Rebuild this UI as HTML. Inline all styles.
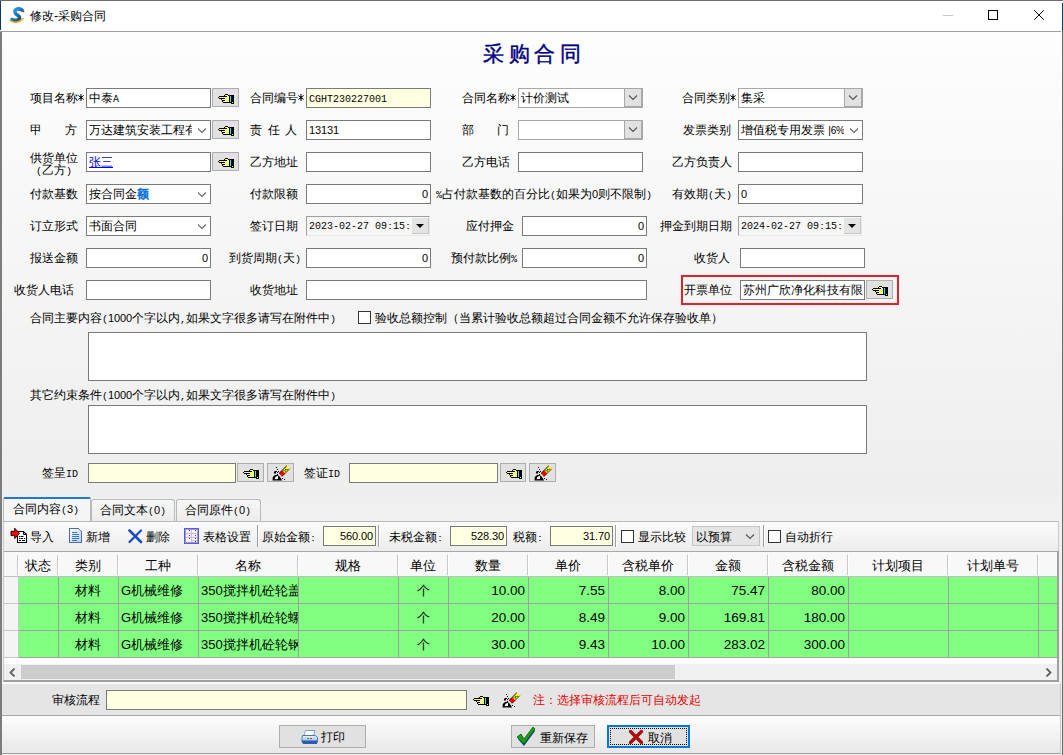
<!DOCTYPE html><html><head><meta charset="utf-8"><style>
@font-face{font-family:"Liberation Mono SA";src:local("Liberation Mono");size-adjust:83.4%;}
@font-face{font-family:"Liberation Sans SA";src:local("Liberation Sans");size-adjust:92%;}
.dg{font-family:"Liberation Sans SA","Liberation Sans",sans-serif;line-height:0}
*{box-sizing:border-box;margin:0;padding:0}
html,body{width:1063px;height:755px;overflow:hidden;background:#fff}
body{position:relative;font-family:"Liberation Sans",sans-serif;font-size:12px;color:#000}
div,svg{position:absolute}
.tx{position:static}
.lb{height:20px;line-height:24px;white-space:nowrap;font-family:"Liberation Mono SA","Liberation Sans",sans-serif}
.in{border:1px solid #7a7a7a;line-height:21px;padding:0 2px;white-space:nowrap;overflow:hidden;font-family:"Liberation Mono SA","Liberation Sans",sans-serif}
.in.cb{border-color:#7a7a7a}
.chw{right:0;top:0;width:18px;height:18px;background:#fff}
.chw svg{left:5px;top:7px}
.chw path{stroke:#6a6a6a}
.chw svg,.cbb svg{position:absolute}
.cbb{right:-1px;top:-1px;width:19px;height:20px;background:#e1e1e1;border-left:1px solid #a8a8a8;border-right:2px solid #a8a8a8;border-bottom:2px solid #a8a8a8;border-top:1px solid #a8a8a8}
.cbb svg{left:3px;top:6px}
.cb2{border-color:#a8a8a8 !important}
.dt{border-color:#a0a0a0;border-right-color:#e8e8e8;border-bottom-color:#e8e8e8;line-height:20px}
.dbb{right:0;top:1px;width:17px;height:16px;background:#e4e4e4;border-right:1px solid #c8c8c8;border-bottom:1px solid #c8c8c8}
.dbb svg{left:4px;top:6px}
.hb{background:#e1e1e1;border:1px solid #adadad}
.ast{position:relative;vertical-align:-1px}
.hand{position:absolute}
.sans{font-family:"Liberation Sans",sans-serif}
.in .sans,.lb .sans{line-height:0}
.mono{font-family:"Liberation Mono SA","Liberation Sans",sans-serif}
</style></head><body>
<div style="left:0;top:32px;width:1063px;height:465px;background:linear-gradient(#fdfdfd,#eeeeee)"></div>
<div style="left:0;top:497px;width:1063px;height:258px;background:#f0f0f0"></div>
<div style="left:0;top:0;width:1063px;height:1px;background:#6e6e6e"></div>
<div style="left:0;top:1px;width:1px;height:29px;background:#0c3a6a"></div>
<div style="left:0;top:31px;width:2px;height:724px;background:#7c7c7c"></div>
<div style="left:1062px;top:3px;width:1px;height:27px;background:#0c3a6a"></div>
<div style="left:1062px;top:30px;width:1px;height:725px;background:#6a6a6a"></div>
<div style="left:0;top:31px;width:1061px;height:1px;background:#a0a0a0"></div>
<svg style="left:9px;top:7px" width="17" height="17" viewBox="0 0 17 17"><defs><linearGradient id="sg" x1="0" y1="0" x2="1" y2="1"><stop offset="0" stop-color="#3aa8e8"/><stop offset="1" stop-color="#0a3c80"/></linearGradient></defs><path d="M13 3 C9.5 0.8 5.5 2 6 5.2 C6.5 8.2 11 8 10.5 11 C10 13.5 6 14 3 12.5" fill="none" stroke="url(#sg)" stroke-width="3.6" stroke-linecap="round"/><path d="M1.5 13.5 C5 16.5 11 15.5 14 11.5" fill="none" stroke="#f0a818" stroke-width="1.6" stroke-linecap="round"/><path d="M14.5 3.5l1 1-1 1-1-1z" fill="#e01010"/></svg>
<div class="sans" style="left:30px;top:8px;line-height:16px;font-size:12px">修改-采购合同</div>
<div style="left:943px;top:15px;width:10px;height:1px;background:#c8c8c8"></div>
<div style="left:988px;top:10px;width:10px;height:10px;border:1px solid #000"></div>
<svg style="left:1034px;top:10px" width="10" height="10" viewBox="0 0 10 10"><path d="M0.3 0.3L9.7 9.7M9.7 0.3L0.3 9.7" stroke="#000" stroke-width="1"/></svg>
<div style="left:483px;top:40px;height:28px;line-height:28px;font-family:'Liberation Serif',serif;font-weight:normal;-webkit-text-stroke:0.4px #000080;font-size:21px;color:#000080;letter-spacing:4.5px;white-space:nowrap">采购合同</div>
<div class="lb " style="left:30px;top:88px;">项目名称<svg class="ast" width="6" height="12" viewBox="0 0 6 12"><path d="M3 3v7M0.3 4.5L5.7 8.5M5.7 4.5L0.3 8.5" stroke="#000" stroke-width="1"/><rect x="2" y="5.5" width="2" height="2" fill="#000"/></svg></div>
<div class="in " style="left:86px;top:88px;width:125px;height:20px;background:#fff;text-align:left;">中泰A</div>
<div class="hb" style="left:212px;top:88px;width:27px;height:19px"><svg class="hand" style="left:5px;top:5px" width="16" height="10" viewBox="0 0 16 10" shape-rendering="crispEdges"><path d="M7 0h1v1h-1zM8 0h1v1h-1zM9 0h1v1h-1zM6 1h1v1h-1zM10 1h1v1h-1zM11 1h1v1h-1zM12 1h1v1h-1zM13 1h1v1h-1zM14 1h1v1h-1zM15 1h1v1h-1zM1 2h1v1h-1zM2 2h1v1h-1zM3 2h1v1h-1zM4 2h1v1h-1zM5 2h1v1h-1zM6 2h1v1h-1zM7 2h1v1h-1zM8 2h1v1h-1zM11 2h1v1h-1zM13 2h1v1h-1zM14 2h1v1h-1zM15 2h1v1h-1zM0 3h1v1h-1zM11 3h1v1h-1zM13 3h1v1h-1zM14 3h1v1h-1zM15 3h1v1h-1zM1 4h1v1h-1zM2 4h1v1h-1zM3 4h1v1h-1zM4 4h1v1h-1zM5 4h1v1h-1zM6 4h1v1h-1zM11 4h1v1h-1zM13 4h1v1h-1zM14 4h1v1h-1zM15 4h1v1h-1zM3 5h1v1h-1zM11 5h1v1h-1zM13 5h1v1h-1zM14 5h1v1h-1zM15 5h1v1h-1zM4 6h1v1h-1zM5 6h1v1h-1zM6 6h1v1h-1zM11 6h1v1h-1zM13 6h1v1h-1zM14 6h1v1h-1zM15 6h1v1h-1zM4 7h1v1h-1zM11 7h1v1h-1zM13 7h1v1h-1zM14 7h1v1h-1zM15 7h1v1h-1zM5 8h1v1h-1zM6 8h1v1h-1zM7 8h1v1h-1zM8 8h1v1h-1zM9 8h1v1h-1zM10 8h1v1h-1zM11 8h1v1h-1zM12 8h1v1h-1zM13 8h1v1h-1zM15 8h1v1h-1zM13 9h1v1h-1zM14 9h1v1h-1zM15 9h1v1h-1z" fill="#000"/><path d="M7 1h1v1h-1zM9 1h1v1h-1zM10 2h1v1h-1zM1 3h1v1h-1zM3 3h1v1h-1zM5 3h1v1h-1zM7 3h1v1h-1zM9 3h1v1h-1zM8 4h1v1h-1zM10 4h1v1h-1zM5 5h1v1h-1zM7 5h1v1h-1zM9 5h1v1h-1zM8 6h1v1h-1zM10 6h1v1h-1zM5 7h1v1h-1zM7 7h1v1h-1zM9 7h1v1h-1zM14 8h1v1h-1z" fill="#ff0"/><path d="M8 1h1v1h-1zM9 2h1v1h-1zM2 3h1v1h-1zM4 3h1v1h-1zM6 3h1v1h-1zM8 3h1v1h-1zM10 3h1v1h-1zM7 4h1v1h-1zM9 4h1v1h-1zM4 5h1v1h-1zM6 5h1v1h-1zM8 5h1v1h-1zM10 5h1v1h-1zM7 6h1v1h-1zM9 6h1v1h-1zM6 7h1v1h-1zM8 7h1v1h-1zM10 7h1v1h-1z" fill="#fff"/><path d="M12 2h1v1h-1zM12 3h1v1h-1zM12 4h1v1h-1zM12 5h1v1h-1zM12 6h1v1h-1zM12 7h1v1h-1z" fill="#0ff"/></svg></div>
<div class="lb " style="left:250px;top:88px;">合同编号<svg class="ast" width="6" height="12" viewBox="0 0 6 12"><path d="M3 3v7M0.3 4.5L5.7 8.5M5.7 4.5L0.3 8.5" stroke="#000" stroke-width="1"/><rect x="2" y="5.5" width="2" height="2" fill="#000"/></svg></div>
<div class="in " style="left:306px;top:88px;width:125px;height:20px;background:#ffffe1;text-align:left;">CGHT230227001</div>
<div class="lb " style="left:462px;top:88px;">合同名称<svg class="ast" width="6" height="12" viewBox="0 0 6 12"><path d="M3 3v7M0.3 4.5L5.7 8.5M5.7 4.5L0.3 8.5" stroke="#000" stroke-width="1"/><rect x="2" y="5.5" width="2" height="2" fill="#000"/></svg></div>
<div class="in cb cb2" style="left:518px;top:88px;width:125px;height:20px;background:#fff;"><span class="tx"><span class="sans">计价测试</span></span><div class="cbb"><svg class="chev" width="10" height="6" viewBox="0 0 10 6"><path d="M1 0.5 L5 4.5 L9 0.5" fill="none" stroke="#555" stroke-width="1.1"/></svg></div></div>
<div class="lb " style="left:682px;top:88px;">合同类别<svg class="ast" width="6" height="12" viewBox="0 0 6 12"><path d="M3 3v7M0.3 4.5L5.7 8.5M5.7 4.5L0.3 8.5" stroke="#000" stroke-width="1"/><rect x="2" y="5.5" width="2" height="2" fill="#000"/></svg></div>
<div class="in cb cb2" style="left:738px;top:88px;width:125px;height:20px;background:#fff;"><span class="tx"><span class="sans">集采</span></span><div class="cbb"><svg class="chev" width="10" height="6" viewBox="0 0 10 6"><path d="M1 0.5 L5 4.5 L9 0.5" fill="none" stroke="#555" stroke-width="1.1"/></svg></div></div>
<div class="lb " style="left:30px;top:120px;">甲</div>
<div class="lb " style="left:65px;top:120px;">方</div>
<div class="in cb" style="left:86px;top:120px;width:125px;height:20px;background:#fff;"><span class="tx"><span class="sans">万达建筑安装工程有</span></span><div class="chw"><svg class="chev" width="10" height="6" viewBox="0 0 10 6"><path d="M1 0.5 L5 4.5 L9 0.5" fill="none" stroke="#555" stroke-width="1.1"/></svg></div></div>
<div class="hb" style="left:212px;top:120px;width:27px;height:19px"><svg class="hand" style="left:5px;top:5px" width="16" height="10" viewBox="0 0 16 10" shape-rendering="crispEdges"><path d="M7 0h1v1h-1zM8 0h1v1h-1zM9 0h1v1h-1zM6 1h1v1h-1zM10 1h1v1h-1zM11 1h1v1h-1zM12 1h1v1h-1zM13 1h1v1h-1zM14 1h1v1h-1zM15 1h1v1h-1zM1 2h1v1h-1zM2 2h1v1h-1zM3 2h1v1h-1zM4 2h1v1h-1zM5 2h1v1h-1zM6 2h1v1h-1zM7 2h1v1h-1zM8 2h1v1h-1zM11 2h1v1h-1zM13 2h1v1h-1zM14 2h1v1h-1zM15 2h1v1h-1zM0 3h1v1h-1zM11 3h1v1h-1zM13 3h1v1h-1zM14 3h1v1h-1zM15 3h1v1h-1zM1 4h1v1h-1zM2 4h1v1h-1zM3 4h1v1h-1zM4 4h1v1h-1zM5 4h1v1h-1zM6 4h1v1h-1zM11 4h1v1h-1zM13 4h1v1h-1zM14 4h1v1h-1zM15 4h1v1h-1zM3 5h1v1h-1zM11 5h1v1h-1zM13 5h1v1h-1zM14 5h1v1h-1zM15 5h1v1h-1zM4 6h1v1h-1zM5 6h1v1h-1zM6 6h1v1h-1zM11 6h1v1h-1zM13 6h1v1h-1zM14 6h1v1h-1zM15 6h1v1h-1zM4 7h1v1h-1zM11 7h1v1h-1zM13 7h1v1h-1zM14 7h1v1h-1zM15 7h1v1h-1zM5 8h1v1h-1zM6 8h1v1h-1zM7 8h1v1h-1zM8 8h1v1h-1zM9 8h1v1h-1zM10 8h1v1h-1zM11 8h1v1h-1zM12 8h1v1h-1zM13 8h1v1h-1zM15 8h1v1h-1zM13 9h1v1h-1zM14 9h1v1h-1zM15 9h1v1h-1z" fill="#000"/><path d="M7 1h1v1h-1zM9 1h1v1h-1zM10 2h1v1h-1zM1 3h1v1h-1zM3 3h1v1h-1zM5 3h1v1h-1zM7 3h1v1h-1zM9 3h1v1h-1zM8 4h1v1h-1zM10 4h1v1h-1zM5 5h1v1h-1zM7 5h1v1h-1zM9 5h1v1h-1zM8 6h1v1h-1zM10 6h1v1h-1zM5 7h1v1h-1zM7 7h1v1h-1zM9 7h1v1h-1zM14 8h1v1h-1z" fill="#ff0"/><path d="M8 1h1v1h-1zM9 2h1v1h-1zM2 3h1v1h-1zM4 3h1v1h-1zM6 3h1v1h-1zM8 3h1v1h-1zM10 3h1v1h-1zM7 4h1v1h-1zM9 4h1v1h-1zM4 5h1v1h-1zM6 5h1v1h-1zM8 5h1v1h-1zM10 5h1v1h-1zM7 6h1v1h-1zM9 6h1v1h-1zM6 7h1v1h-1zM8 7h1v1h-1zM10 7h1v1h-1z" fill="#fff"/><path d="M12 2h1v1h-1zM12 3h1v1h-1zM12 4h1v1h-1zM12 5h1v1h-1zM12 6h1v1h-1zM12 7h1v1h-1z" fill="#0ff"/></svg></div>
<div class="lb " style="left:250px;top:120px;">责</div>
<div class="lb " style="left:268px;top:120px;">任</div>
<div class="lb " style="left:285px;top:120px;">人</div>
<div class="in " style="left:306px;top:120px;width:125px;height:20px;background:#fff;text-align:left;"><span class="dg">13131</span></div>
<div class="lb " style="left:462px;top:120px;">部</div>
<div class="lb " style="left:497px;top:120px;">门</div>
<div class="in cb cb2" style="left:518px;top:120px;width:125px;height:20px;background:#fff;"><span class="tx"></span><div class="cbb"><svg class="chev" width="10" height="6" viewBox="0 0 10 6"><path d="M1 0.5 L5 4.5 L9 0.5" fill="none" stroke="#555" stroke-width="1.1"/></svg></div></div>
<div class="lb " style="left:683px;top:120px;">发票类别</div>
<div class="in cb" style="left:738px;top:120px;width:125px;height:20px;background:#fff;"><span class="tx"><span class="sans">增值税专用发票 <span style="font-size:10px;letter-spacing:-0.3px">|6%</span></span></span><div class="chw"><svg class="chev" width="10" height="6" viewBox="0 0 10 6"><path d="M1 0.5 L5 4.5 L9 0.5" fill="none" stroke="#555" stroke-width="1.1"/></svg></div></div>
<div class="lb" style="left:30px;top:154px;line-height:12px;height:30px">供货单位</div>
<div class="lb" style="left:30px;top:166px;line-height:12px;height:30px">&nbsp;(乙方)</div>
<div class="in " style="left:86px;top:152px;width:125px;height:20px;background:#fff;text-align:left;"><span class="sans" style="color:#0000ff;text-decoration:underline">张三</span></div>
<div class="hb" style="left:212px;top:152px;width:27px;height:19px"><svg class="hand" style="left:5px;top:5px" width="16" height="10" viewBox="0 0 16 10" shape-rendering="crispEdges"><path d="M7 0h1v1h-1zM8 0h1v1h-1zM9 0h1v1h-1zM6 1h1v1h-1zM10 1h1v1h-1zM11 1h1v1h-1zM12 1h1v1h-1zM13 1h1v1h-1zM14 1h1v1h-1zM15 1h1v1h-1zM1 2h1v1h-1zM2 2h1v1h-1zM3 2h1v1h-1zM4 2h1v1h-1zM5 2h1v1h-1zM6 2h1v1h-1zM7 2h1v1h-1zM8 2h1v1h-1zM11 2h1v1h-1zM13 2h1v1h-1zM14 2h1v1h-1zM15 2h1v1h-1zM0 3h1v1h-1zM11 3h1v1h-1zM13 3h1v1h-1zM14 3h1v1h-1zM15 3h1v1h-1zM1 4h1v1h-1zM2 4h1v1h-1zM3 4h1v1h-1zM4 4h1v1h-1zM5 4h1v1h-1zM6 4h1v1h-1zM11 4h1v1h-1zM13 4h1v1h-1zM14 4h1v1h-1zM15 4h1v1h-1zM3 5h1v1h-1zM11 5h1v1h-1zM13 5h1v1h-1zM14 5h1v1h-1zM15 5h1v1h-1zM4 6h1v1h-1zM5 6h1v1h-1zM6 6h1v1h-1zM11 6h1v1h-1zM13 6h1v1h-1zM14 6h1v1h-1zM15 6h1v1h-1zM4 7h1v1h-1zM11 7h1v1h-1zM13 7h1v1h-1zM14 7h1v1h-1zM15 7h1v1h-1zM5 8h1v1h-1zM6 8h1v1h-1zM7 8h1v1h-1zM8 8h1v1h-1zM9 8h1v1h-1zM10 8h1v1h-1zM11 8h1v1h-1zM12 8h1v1h-1zM13 8h1v1h-1zM15 8h1v1h-1zM13 9h1v1h-1zM14 9h1v1h-1zM15 9h1v1h-1z" fill="#000"/><path d="M7 1h1v1h-1zM9 1h1v1h-1zM10 2h1v1h-1zM1 3h1v1h-1zM3 3h1v1h-1zM5 3h1v1h-1zM7 3h1v1h-1zM9 3h1v1h-1zM8 4h1v1h-1zM10 4h1v1h-1zM5 5h1v1h-1zM7 5h1v1h-1zM9 5h1v1h-1zM8 6h1v1h-1zM10 6h1v1h-1zM5 7h1v1h-1zM7 7h1v1h-1zM9 7h1v1h-1zM14 8h1v1h-1z" fill="#ff0"/><path d="M8 1h1v1h-1zM9 2h1v1h-1zM2 3h1v1h-1zM4 3h1v1h-1zM6 3h1v1h-1zM8 3h1v1h-1zM10 3h1v1h-1zM7 4h1v1h-1zM9 4h1v1h-1zM4 5h1v1h-1zM6 5h1v1h-1zM8 5h1v1h-1zM10 5h1v1h-1zM7 6h1v1h-1zM9 6h1v1h-1zM6 7h1v1h-1zM8 7h1v1h-1zM10 7h1v1h-1z" fill="#fff"/><path d="M12 2h1v1h-1zM12 3h1v1h-1zM12 4h1v1h-1zM12 5h1v1h-1zM12 6h1v1h-1zM12 7h1v1h-1z" fill="#0ff"/></svg></div>
<div class="lb " style="left:250px;top:152px;">乙方地址</div>
<div class="in " style="left:306px;top:152px;width:125px;height:20px;background:#fff;text-align:left;"></div>
<div class="lb " style="left:462px;top:152px;">乙方电话</div>
<div class="in " style="left:518px;top:152px;width:125px;height:20px;background:#fff;text-align:left;"></div>
<div class="lb " style="left:672px;top:152px;">乙方负责人</div>
<div class="in " style="left:738px;top:152px;width:125px;height:20px;background:#fff;text-align:left;"></div>
<div class="lb " style="left:30px;top:184px;">付款基数</div>
<div class="in cb" style="left:86px;top:184px;width:125px;height:20px;background:#fff;"><span class="tx"><span class="sans">按合同金<span style="color:#0a72dc;-webkit-text-stroke:0.6px #0a72dc">额</span></span></span><div class="chw"><svg class="chev" width="10" height="6" viewBox="0 0 10 6"><path d="M1 0.5 L5 4.5 L9 0.5" fill="none" stroke="#555" stroke-width="1.1"/></svg></div></div>
<div class="lb " style="left:250px;top:184px;">付款限额</div>
<div class="in " style="left:306px;top:184px;width:125px;height:20px;background:#fff;text-align:right;"><span class="dg">0</span></div>
<div class="lb " style="left:436px;top:184px;">%占付款基数的百分比(如果为<span class="dg">0</span>则不限制)</div>
<div class="lb " style="left:672px;top:184px;">有效期(天)</div>
<div class="in " style="left:738px;top:184px;width:125px;height:20px;background:#fff;text-align:left;"><span class="dg">0</span></div>
<div class="lb " style="left:30px;top:216px;">订立形式</div>
<div class="in cb" style="left:86px;top:216px;width:125px;height:20px;background:#fff;"><span class="tx"><span class="sans">书面合同</span></span><div class="chw"><svg class="chev" width="10" height="6" viewBox="0 0 10 6"><path d="M1 0.5 L5 4.5 L9 0.5" fill="none" stroke="#555" stroke-width="1.1"/></svg></div></div>
<div class="lb " style="left:250px;top:216px;">签订日期</div>
<div class="in dt" style="left:306px;top:216px;width:124px;height:20px"><span class="tx mono">2023-02-27 09:15:(</span><div class="dbb"><svg width="8" height="4" viewBox="0 0 8 4"><path d="M0 0h8L4 4z" fill="#000"/></svg></div></div>
<div class="lb " style="left:466px;top:216px;">应付押金</div>
<div class="in " style="left:522px;top:216px;width:125px;height:20px;background:#fff;text-align:right;"><span class="dg">0</span></div>
<div class="lb " style="left:660px;top:216px;">押金到期日期</div>
<div class="in dt" style="left:738px;top:216px;width:124px;height:20px"><span class="tx mono">2024-02-27 09:15:</span><div class="dbb"><svg width="8" height="4" viewBox="0 0 8 4"><path d="M0 0h8L4 4z" fill="#000"/></svg></div></div>
<div class="lb " style="left:30px;top:248px;">报送金额</div>
<div class="in " style="left:86px;top:248px;width:125px;height:20px;background:#fff;text-align:right;"><span class="dg">0</span></div>
<div class="lb " style="left:229px;top:248px;">到货周期(天)</div>
<div class="in " style="left:306px;top:248px;width:125px;height:20px;background:#fff;text-align:right;"><span class="dg">0</span></div>
<div class="lb " style="left:451px;top:248px;">预付款比例%</div>
<div class="in " style="left:522px;top:248px;width:125px;height:20px;background:#fff;text-align:right;"><span class="dg">0</span></div>
<div class="lb " style="left:694px;top:248px;">收货人</div>
<div class="in " style="left:740px;top:248px;width:125px;height:20px;background:#fff;text-align:left;"></div>
<div class="lb " style="left:14px;top:280px;">收货人电话</div>
<div class="in " style="left:86px;top:280px;width:125px;height:20px;background:#fff;text-align:left;"></div>
<div class="lb " style="left:250px;top:280px;">收货地址</div>
<div class="in " style="left:306px;top:280px;width:341px;height:20px;background:#fff;text-align:left;"></div>
<div style="left:681px;top:275px;width:218px;height:30px;border:2px solid #e3212b"></div>
<div class="lb " style="left:684px;top:280px;">开票单位</div>
<div class="in " style="left:740px;top:280px;width:125px;height:20px;background:#fff;text-align:left;"><span class="sans">苏州广欣净化科技有限</span></div>
<div class="hb" style="left:866px;top:280px;width:27px;height:19px"><svg class="hand" style="left:5px;top:5px" width="16" height="10" viewBox="0 0 16 10" shape-rendering="crispEdges"><path d="M7 0h1v1h-1zM8 0h1v1h-1zM9 0h1v1h-1zM6 1h1v1h-1zM10 1h1v1h-1zM11 1h1v1h-1zM12 1h1v1h-1zM13 1h1v1h-1zM14 1h1v1h-1zM15 1h1v1h-1zM1 2h1v1h-1zM2 2h1v1h-1zM3 2h1v1h-1zM4 2h1v1h-1zM5 2h1v1h-1zM6 2h1v1h-1zM7 2h1v1h-1zM8 2h1v1h-1zM11 2h1v1h-1zM13 2h1v1h-1zM14 2h1v1h-1zM15 2h1v1h-1zM0 3h1v1h-1zM11 3h1v1h-1zM13 3h1v1h-1zM14 3h1v1h-1zM15 3h1v1h-1zM1 4h1v1h-1zM2 4h1v1h-1zM3 4h1v1h-1zM4 4h1v1h-1zM5 4h1v1h-1zM6 4h1v1h-1zM11 4h1v1h-1zM13 4h1v1h-1zM14 4h1v1h-1zM15 4h1v1h-1zM3 5h1v1h-1zM11 5h1v1h-1zM13 5h1v1h-1zM14 5h1v1h-1zM15 5h1v1h-1zM4 6h1v1h-1zM5 6h1v1h-1zM6 6h1v1h-1zM11 6h1v1h-1zM13 6h1v1h-1zM14 6h1v1h-1zM15 6h1v1h-1zM4 7h1v1h-1zM11 7h1v1h-1zM13 7h1v1h-1zM14 7h1v1h-1zM15 7h1v1h-1zM5 8h1v1h-1zM6 8h1v1h-1zM7 8h1v1h-1zM8 8h1v1h-1zM9 8h1v1h-1zM10 8h1v1h-1zM11 8h1v1h-1zM12 8h1v1h-1zM13 8h1v1h-1zM15 8h1v1h-1zM13 9h1v1h-1zM14 9h1v1h-1zM15 9h1v1h-1z" fill="#000"/><path d="M7 1h1v1h-1zM9 1h1v1h-1zM10 2h1v1h-1zM1 3h1v1h-1zM3 3h1v1h-1zM5 3h1v1h-1zM7 3h1v1h-1zM9 3h1v1h-1zM8 4h1v1h-1zM10 4h1v1h-1zM5 5h1v1h-1zM7 5h1v1h-1zM9 5h1v1h-1zM8 6h1v1h-1zM10 6h1v1h-1zM5 7h1v1h-1zM7 7h1v1h-1zM9 7h1v1h-1zM14 8h1v1h-1z" fill="#ff0"/><path d="M8 1h1v1h-1zM9 2h1v1h-1zM2 3h1v1h-1zM4 3h1v1h-1zM6 3h1v1h-1zM8 3h1v1h-1zM10 3h1v1h-1zM7 4h1v1h-1zM9 4h1v1h-1zM4 5h1v1h-1zM6 5h1v1h-1zM8 5h1v1h-1zM10 5h1v1h-1zM7 6h1v1h-1zM9 6h1v1h-1zM6 7h1v1h-1zM8 7h1v1h-1zM10 7h1v1h-1z" fill="#fff"/><path d="M12 2h1v1h-1zM12 3h1v1h-1zM12 4h1v1h-1zM12 5h1v1h-1zM12 6h1v1h-1zM12 7h1v1h-1z" fill="#0ff"/></svg></div>
<div class="lb " style="left:30px;top:308px;">合同主要内容(<span class="dg">1000</span>个字以内,如果文字很多请写在附件中)</div>
<div style="left:358px;top:311px;width:13px;height:13px;border:1px solid #333;background:#fff"></div>
<div class="lb " style="left:375px;top:308px;"><span class="sans">验收总额控制（当累计验收总额超过合同金额不允许保存验收单）</span></div>
<div class="in " style="left:88px;top:332px;width:779px;height:49px;background:#fff;text-align:left;"></div>
<div class="lb " style="left:30px;top:385px;">其它约束条件(<span class="dg">1000</span>个字以内,如果文字很多请写在附件中)</div>
<div class="in " style="left:88px;top:405px;width:779px;height:49px;background:#fff;text-align:left;"></div>
<div class="lb " style="left:42px;top:463px;">签呈ID</div>
<div class="in " style="left:88px;top:463px;width:148px;height:20px;background:#ffffe1;text-align:left;"></div>
<div class="hb" style="left:237px;top:463px;width:27px;height:19px"><svg class="hand" style="left:5px;top:5px" width="16" height="10" viewBox="0 0 16 10" shape-rendering="crispEdges"><path d="M7 0h1v1h-1zM8 0h1v1h-1zM9 0h1v1h-1zM6 1h1v1h-1zM10 1h1v1h-1zM11 1h1v1h-1zM12 1h1v1h-1zM13 1h1v1h-1zM14 1h1v1h-1zM15 1h1v1h-1zM1 2h1v1h-1zM2 2h1v1h-1zM3 2h1v1h-1zM4 2h1v1h-1zM5 2h1v1h-1zM6 2h1v1h-1zM7 2h1v1h-1zM8 2h1v1h-1zM11 2h1v1h-1zM13 2h1v1h-1zM14 2h1v1h-1zM15 2h1v1h-1zM0 3h1v1h-1zM11 3h1v1h-1zM13 3h1v1h-1zM14 3h1v1h-1zM15 3h1v1h-1zM1 4h1v1h-1zM2 4h1v1h-1zM3 4h1v1h-1zM4 4h1v1h-1zM5 4h1v1h-1zM6 4h1v1h-1zM11 4h1v1h-1zM13 4h1v1h-1zM14 4h1v1h-1zM15 4h1v1h-1zM3 5h1v1h-1zM11 5h1v1h-1zM13 5h1v1h-1zM14 5h1v1h-1zM15 5h1v1h-1zM4 6h1v1h-1zM5 6h1v1h-1zM6 6h1v1h-1zM11 6h1v1h-1zM13 6h1v1h-1zM14 6h1v1h-1zM15 6h1v1h-1zM4 7h1v1h-1zM11 7h1v1h-1zM13 7h1v1h-1zM14 7h1v1h-1zM15 7h1v1h-1zM5 8h1v1h-1zM6 8h1v1h-1zM7 8h1v1h-1zM8 8h1v1h-1zM9 8h1v1h-1zM10 8h1v1h-1zM11 8h1v1h-1zM12 8h1v1h-1zM13 8h1v1h-1zM15 8h1v1h-1zM13 9h1v1h-1zM14 9h1v1h-1zM15 9h1v1h-1z" fill="#000"/><path d="M7 1h1v1h-1zM9 1h1v1h-1zM10 2h1v1h-1zM1 3h1v1h-1zM3 3h1v1h-1zM5 3h1v1h-1zM7 3h1v1h-1zM9 3h1v1h-1zM8 4h1v1h-1zM10 4h1v1h-1zM5 5h1v1h-1zM7 5h1v1h-1zM9 5h1v1h-1zM8 6h1v1h-1zM10 6h1v1h-1zM5 7h1v1h-1zM7 7h1v1h-1zM9 7h1v1h-1zM14 8h1v1h-1z" fill="#ff0"/><path d="M8 1h1v1h-1zM9 2h1v1h-1zM2 3h1v1h-1zM4 3h1v1h-1zM6 3h1v1h-1zM8 3h1v1h-1zM10 3h1v1h-1zM7 4h1v1h-1zM9 4h1v1h-1zM4 5h1v1h-1zM6 5h1v1h-1zM8 5h1v1h-1zM10 5h1v1h-1zM7 6h1v1h-1zM9 6h1v1h-1zM6 7h1v1h-1zM8 7h1v1h-1zM10 7h1v1h-1z" fill="#fff"/><path d="M12 2h1v1h-1zM12 3h1v1h-1zM12 4h1v1h-1zM12 5h1v1h-1zM12 6h1v1h-1zM12 7h1v1h-1z" fill="#0ff"/></svg></div>
<div class="hb" style="left:267px;top:463px;width:27px;height:19px"><svg class="hand" style="left:3px;top:-1px" width="20" height="20" viewBox="0 0 20 20"><g transform="translate(9.5 12) rotate(-45)"><rect x="0" y="-2.1" width="4.6" height="4.2" fill="#f00"/><rect x="4.6" y="-2.1" width="6.4" height="4.2" fill="#ff0"/><path d="M0 -2.1H11" stroke="#000" stroke-width="0.9"/><path d="M0 2.1H11" stroke="#000" stroke-width="0.7"/><path d="M5 -1h1v1h-1zM7 -1h1v1h-1zM6 0.3h1v1h-1zM8 0.3h1v1h-1z" fill="#000"/></g><path d="M1.5 17.5L1.8 14L4 12L6.5 11.8L8.5 13.5L10 15.5L11 17.5Z" fill="#000"/><path d="M3.5 16.2L4.5 13.8L7 12.8L7 16Z" fill="#fff"/><path d="M3 8.5h2v2h-2zM4 8h2v1h-2z" fill="#000"/><path d="M5 4h1v1h-1zM6 6h1v1h-1zM7 8h1v1h-1zM6 9h1v1h-1zM6 11h1v1h-1zM11 15h1v1h-1zM13 16h1v1h-1z" fill="#000" shape-rendering="crispEdges"/></svg></div>
<div class="lb " style="left:304px;top:463px;">签证ID</div>
<div class="in " style="left:349px;top:463px;width:149px;height:20px;background:#ffffe1;text-align:left;"></div>
<div class="hb" style="left:500px;top:463px;width:26px;height:19px"><svg class="hand" style="left:5px;top:5px" width="16" height="10" viewBox="0 0 16 10" shape-rendering="crispEdges"><path d="M7 0h1v1h-1zM8 0h1v1h-1zM9 0h1v1h-1zM6 1h1v1h-1zM10 1h1v1h-1zM11 1h1v1h-1zM12 1h1v1h-1zM13 1h1v1h-1zM14 1h1v1h-1zM15 1h1v1h-1zM1 2h1v1h-1zM2 2h1v1h-1zM3 2h1v1h-1zM4 2h1v1h-1zM5 2h1v1h-1zM6 2h1v1h-1zM7 2h1v1h-1zM8 2h1v1h-1zM11 2h1v1h-1zM13 2h1v1h-1zM14 2h1v1h-1zM15 2h1v1h-1zM0 3h1v1h-1zM11 3h1v1h-1zM13 3h1v1h-1zM14 3h1v1h-1zM15 3h1v1h-1zM1 4h1v1h-1zM2 4h1v1h-1zM3 4h1v1h-1zM4 4h1v1h-1zM5 4h1v1h-1zM6 4h1v1h-1zM11 4h1v1h-1zM13 4h1v1h-1zM14 4h1v1h-1zM15 4h1v1h-1zM3 5h1v1h-1zM11 5h1v1h-1zM13 5h1v1h-1zM14 5h1v1h-1zM15 5h1v1h-1zM4 6h1v1h-1zM5 6h1v1h-1zM6 6h1v1h-1zM11 6h1v1h-1zM13 6h1v1h-1zM14 6h1v1h-1zM15 6h1v1h-1zM4 7h1v1h-1zM11 7h1v1h-1zM13 7h1v1h-1zM14 7h1v1h-1zM15 7h1v1h-1zM5 8h1v1h-1zM6 8h1v1h-1zM7 8h1v1h-1zM8 8h1v1h-1zM9 8h1v1h-1zM10 8h1v1h-1zM11 8h1v1h-1zM12 8h1v1h-1zM13 8h1v1h-1zM15 8h1v1h-1zM13 9h1v1h-1zM14 9h1v1h-1zM15 9h1v1h-1z" fill="#000"/><path d="M7 1h1v1h-1zM9 1h1v1h-1zM10 2h1v1h-1zM1 3h1v1h-1zM3 3h1v1h-1zM5 3h1v1h-1zM7 3h1v1h-1zM9 3h1v1h-1zM8 4h1v1h-1zM10 4h1v1h-1zM5 5h1v1h-1zM7 5h1v1h-1zM9 5h1v1h-1zM8 6h1v1h-1zM10 6h1v1h-1zM5 7h1v1h-1zM7 7h1v1h-1zM9 7h1v1h-1zM14 8h1v1h-1z" fill="#ff0"/><path d="M8 1h1v1h-1zM9 2h1v1h-1zM2 3h1v1h-1zM4 3h1v1h-1zM6 3h1v1h-1zM8 3h1v1h-1zM10 3h1v1h-1zM7 4h1v1h-1zM9 4h1v1h-1zM4 5h1v1h-1zM6 5h1v1h-1zM8 5h1v1h-1zM10 5h1v1h-1zM7 6h1v1h-1zM9 6h1v1h-1zM6 7h1v1h-1zM8 7h1v1h-1zM10 7h1v1h-1z" fill="#fff"/><path d="M12 2h1v1h-1zM12 3h1v1h-1zM12 4h1v1h-1zM12 5h1v1h-1zM12 6h1v1h-1zM12 7h1v1h-1z" fill="#0ff"/></svg></div>
<div class="hb" style="left:529px;top:463px;width:27px;height:19px"><svg class="hand" style="left:3px;top:-1px" width="20" height="20" viewBox="0 0 20 20"><g transform="translate(9.5 12) rotate(-45)"><rect x="0" y="-2.1" width="4.6" height="4.2" fill="#f00"/><rect x="4.6" y="-2.1" width="6.4" height="4.2" fill="#ff0"/><path d="M0 -2.1H11" stroke="#000" stroke-width="0.9"/><path d="M0 2.1H11" stroke="#000" stroke-width="0.7"/><path d="M5 -1h1v1h-1zM7 -1h1v1h-1zM6 0.3h1v1h-1zM8 0.3h1v1h-1z" fill="#000"/></g><path d="M1.5 17.5L1.8 14L4 12L6.5 11.8L8.5 13.5L10 15.5L11 17.5Z" fill="#000"/><path d="M3.5 16.2L4.5 13.8L7 12.8L7 16Z" fill="#fff"/><path d="M3 8.5h2v2h-2zM4 8h2v1h-2z" fill="#000"/><path d="M5 4h1v1h-1zM6 6h1v1h-1zM7 8h1v1h-1zM6 9h1v1h-1zM6 11h1v1h-1zM11 15h1v1h-1zM13 16h1v1h-1z" fill="#000" shape-rendering="crispEdges"/></svg></div>
<div style="left:3px;top:521px;width:1056px;height:163px;background:#f4f4f4;border:1px solid #c9c9c9;border-top:none"></div>
<div style="left:91px;top:499px;width:84px;height:23px;background:linear-gradient(#f7f7f7,#ececec);border:1px solid #b9b9b9;border-bottom:none;border-radius:3px 3px 0 0"></div>
<div style="left:176px;top:499px;width:85px;height:23px;background:linear-gradient(#f7f7f7,#ececec);border:1px solid #b9b9b9;border-bottom:none;border-radius:3px 3px 0 0"></div>
<div style="left:3px;top:497px;width:88px;height:25px;background:#f5f5f5;border:1px solid #b9b9b9;border-bottom:none;border-top:2px solid #1e78d8;border-radius:2px 2px 0 0"></div>
<div class="lb " style="left:13px;top:499px;">合同内容(<span class="dg">3</span>)</div>
<div class="lb " style="left:100px;top:500px;">合同文本(<span class="dg">0</span>)</div>
<div class="lb " style="left:185px;top:500px;">合同原件(<span class="dg">0</span>)</div>
<div style="left:4px;top:521px;width:1054px;height:30px;background:linear-gradient(#fbfbfb,#ececec);border-top:1px solid #b9b9b9"></div>
<svg style="left:10px;top:527px" width="18" height="17" viewBox="0 0 18 17"><path d="M7.5 4.5H13.5L16.5 7.5V15.5H7.5Z" fill="#fff" stroke="#000" stroke-width="1.1"/><path d="M13.5 4.5V7.5H16.5" fill="none" stroke="#000" stroke-width="1"/><path d="M9 9.5h1.5M11 9.5h2.5M9 11.5h1M10.5 11.5h2.5M14 11.5h1M9 13.5h2M12 13.5h3" stroke="#000" stroke-width="1"/><path d="M1 4.3H4.7V1.2L9.6 6.4L4.7 11.6V8.6H1Z" fill="#f00" stroke="#000" stroke-width="0.9"/></svg>
<div class="lb " style="left:30px;top:527px;">导入</div>
<svg style="left:69px;top:528px" width="14" height="15" viewBox="0 0 14 15" shape-rendering="crispEdges"><defs><linearGradient id="pg" x1="0" y1="0" x2="1" y2="1"><stop offset="0" stop-color="#ffffff"/><stop offset="1" stop-color="#b8cce8"/></linearGradient></defs><path d="M0.5 0.5h9l3 3v11h-12z" fill="url(#pg)" stroke="#4a6fa8"/><path d="M3 4h5v1h-5zM3 6h7v1h-7zM3 8h7v1h-7zM3 10h7v1h-7zM3 12h5v1h-5z" fill="#3a78d8"/></svg>
<div class="lb " style="left:86px;top:527px;">新增</div>
<svg style="left:128px;top:529px" width="15" height="15" viewBox="0 0 15 15"><path d="M1.5 1.5L13 13" stroke="#1a48c8" stroke-width="2.6" stroke-linecap="round"/><path d="M13 1.5L1.5 13" stroke="#1a48c8" stroke-width="2.2" stroke-linecap="round"/></svg>
<div class="lb " style="left:146px;top:527px;">删除</div>
<svg style="left:184px;top:528px" width="15" height="16" viewBox="0 0 15 16" shape-rendering="crispEdges"><path d="M7 1h1v14h-1zM1 5h13v1h-13zM1 9h13v1h-13zM8 12h6v1h-6z" fill="#c0c0f4"/><path d="M0 0h15v1h-15zM0 15h15v1h-15zM0 0h1v16h-1zM14 0h1v16h-1z" fill="#5a5ad0"/><path d="M1 1h13v1h-13zM1 14h13v1h-13zM1 1h1v14h-1zM13 1h1v14h-1z" fill="#9a9ae4"/><path d="M5 2h1v1h-1zM11 2h1v1h-1zM5 7h1v1h-1zM11 7h1v1h-1zM5 10h1v1h-1zM11 10h1v1h-1zM11 13h1v1h-1z" fill="#d01010"/></svg>
<div class="lb " style="left:203px;top:527px;">表格设置</div>
<div style="left:257px;top:525px;width:2px;height:22px;background:#a0a0a0;border-right:1px solid #fff"></div>
<div class="lb " style="left:262px;top:527px;">原始金额:</div>
<div class="in " style="left:323px;top:526px;width:53px;height:20px;background:#ffffe1;text-align:right;"><span class="dg">560.00</span></div>
<div style="left:378px;top:525px;width:2px;height:22px;background:#a0a0a0;border-right:1px solid #fff"></div>
<div class="lb " style="left:389px;top:527px;">未税金额:</div>
<div class="in " style="left:450px;top:526px;width:57px;height:20px;background:#ffffe1;text-align:right;"><span class="dg">528.30</span></div>
<div class="lb " style="left:513px;top:527px;">税额:</div>
<div class="in " style="left:550px;top:526px;width:63px;height:20px;background:#ffffe1;text-align:right;"><span class="dg">31.70</span></div>
<div style="left:615px;top:525px;width:2px;height:22px;background:#a0a0a0;border-right:1px solid #fff"></div>
<div style="left:621px;top:530px;width:13px;height:13px;border:1px solid #333;background:#fff"></div>
<div class="lb " style="left:638px;top:527px;">显示比较</div>
<div style="left:692px;top:526px;width:68px;height:20px;background:#e5e5e5;border:1px solid #c4c4c4"><span style="position:absolute;left:3px;top:1px;line-height:18px" class="sans">以预算</span><div style="left:52px;top:7px"><svg class="chev" width="10" height="6" viewBox="0 0 10 6"><path d="M1 0.5 L5 4.5 L9 0.5" fill="none" stroke="#555" stroke-width="1.1"/></svg></div></div>
<div style="left:763px;top:525px;width:2px;height:22px;background:#a0a0a0;border-right:1px solid #fff"></div>
<div style="left:768px;top:530px;width:13px;height:13px;border:1px solid #333;background:#fff"></div>
<div class="lb " style="left:785px;top:527px;">自动折行</div>
<div style="left:3px;top:551px;width:1056px;height:131px;background:#fff;border-right:2px solid #a0a0a0;border-bottom:2px solid #a0a0a0;border-left:1px solid #c8c8c8"></div>
<div style="left:4px;top:551px;width:1053px;height:26px;background:#f8f8f8;border-top:1px solid #a8a8a8;border-bottom:1px solid #c0c0c0"></div>
<div style="left:17px;top:555px;width:2px;height:20px;border-left:1px solid #c8c8c8;border-right:1px solid #fff"></div>
<div class="sans" style="left:18px;top:558px;width:40px;text-align:center;line-height:16px;font-size:13px">状态</div>
<div style="left:57px;top:555px;width:2px;height:20px;border-left:1px solid #c8c8c8;border-right:1px solid #fff"></div>
<div class="sans" style="left:58px;top:558px;width:60px;text-align:center;line-height:16px;font-size:13px">类别</div>
<div style="left:117px;top:555px;width:2px;height:20px;border-left:1px solid #c8c8c8;border-right:1px solid #fff"></div>
<div class="sans" style="left:118px;top:558px;width:80px;text-align:center;line-height:16px;font-size:13px">工种</div>
<div style="left:197px;top:555px;width:2px;height:20px;border-left:1px solid #c8c8c8;border-right:1px solid #fff"></div>
<div class="sans" style="left:198px;top:558px;width:100px;text-align:center;line-height:16px;font-size:13px">名称</div>
<div style="left:297px;top:555px;width:2px;height:20px;border-left:1px solid #c8c8c8;border-right:1px solid #fff"></div>
<div class="sans" style="left:298px;top:558px;width:100px;text-align:center;line-height:16px;font-size:13px">规格</div>
<div style="left:397px;top:555px;width:2px;height:20px;border-left:1px solid #c8c8c8;border-right:1px solid #fff"></div>
<div class="sans" style="left:398px;top:558px;width:50px;text-align:center;line-height:16px;font-size:13px">单位</div>
<div style="left:447px;top:555px;width:2px;height:20px;border-left:1px solid #c8c8c8;border-right:1px solid #fff"></div>
<div class="sans" style="left:448px;top:558px;width:80px;text-align:center;line-height:16px;font-size:13px">数量</div>
<div style="left:527px;top:555px;width:2px;height:20px;border-left:1px solid #c8c8c8;border-right:1px solid #fff"></div>
<div class="sans" style="left:528px;top:558px;width:80px;text-align:center;line-height:16px;font-size:13px">单价</div>
<div style="left:607px;top:555px;width:2px;height:20px;border-left:1px solid #c8c8c8;border-right:1px solid #fff"></div>
<div class="sans" style="left:608px;top:558px;width:80px;text-align:center;line-height:16px;font-size:13px">含税单价</div>
<div style="left:687px;top:555px;width:2px;height:20px;border-left:1px solid #c8c8c8;border-right:1px solid #fff"></div>
<div class="sans" style="left:688px;top:558px;width:80px;text-align:center;line-height:16px;font-size:13px">金额</div>
<div style="left:767px;top:555px;width:2px;height:20px;border-left:1px solid #c8c8c8;border-right:1px solid #fff"></div>
<div class="sans" style="left:768px;top:558px;width:80px;text-align:center;line-height:16px;font-size:13px">含税金额</div>
<div style="left:847px;top:555px;width:2px;height:20px;border-left:1px solid #c8c8c8;border-right:1px solid #fff"></div>
<div class="sans" style="left:848px;top:558px;width:100px;text-align:center;line-height:16px;font-size:13px">计划项目</div>
<div style="left:947px;top:555px;width:2px;height:20px;border-left:1px solid #c8c8c8;border-right:1px solid #fff"></div>
<div class="sans" style="left:948px;top:558px;width:90px;text-align:center;line-height:16px;font-size:13px">计划单号</div>
<div style="left:1037px;top:555px;width:2px;height:20px;border-left:1px solid #c8c8c8;border-right:1px solid #fff"></div>
<div class="sans" style="left:1038px;top:558px;width:19px;text-align:center;line-height:16px;font-size:13px"></div>
<div style="left:19px;top:577px;width:1038px;height:81px;background:#80ff80"></div>
<div style="left:4px;top:577px;width:15px;height:27px;background:#f4f4f4;border-bottom:1px solid #c8c8c8;border-right:1px solid #c8c8c8"></div>
<div style="left:19px;top:603px;width:1038px;height:1px;background:#a0a0a0"></div>
<div class="sans" style="left:58px;top:582px;width:60px;text-align:center;line-height:17px;font-size:13px;white-space:nowrap;overflow:hidden">材料</div>
<div class="sans" style="left:118px;top:582px;width:80px;text-align:left;padding-left:3px;line-height:17px;font-size:13px;white-space:nowrap;overflow:hidden">G机械维修</div>
<div class="sans" style="left:198px;top:582px;width:100px;text-align:left;padding-left:3px;line-height:17px;font-size:13px;white-space:nowrap;overflow:hidden">350搅拌机砼轮盖</div>
<div class="sans" style="left:398px;top:582px;width:50px;text-align:center;line-height:17px;font-size:13px;white-space:nowrap;overflow:hidden">个</div>
<div class="sans" style="left:448px;top:582px;width:80px;text-align:right;padding-right:3px;line-height:17px;font-size:13.5px;white-space:nowrap;overflow:hidden">10.00</div>
<div class="sans" style="left:528px;top:582px;width:80px;text-align:right;padding-right:3px;line-height:17px;font-size:13.5px;white-space:nowrap;overflow:hidden">7.55</div>
<div class="sans" style="left:608px;top:582px;width:80px;text-align:right;padding-right:3px;line-height:17px;font-size:13.5px;white-space:nowrap;overflow:hidden">8.00</div>
<div class="sans" style="left:688px;top:582px;width:80px;text-align:right;padding-right:3px;line-height:17px;font-size:13.5px;white-space:nowrap;overflow:hidden">75.47</div>
<div class="sans" style="left:768px;top:582px;width:80px;text-align:right;padding-right:3px;line-height:17px;font-size:13.5px;white-space:nowrap;overflow:hidden">80.00</div>
<div style="left:4px;top:604px;width:15px;height:27px;background:#f4f4f4;border-bottom:1px solid #c8c8c8;border-right:1px solid #c8c8c8"></div>
<div style="left:19px;top:630px;width:1038px;height:1px;background:#a0a0a0"></div>
<div class="sans" style="left:58px;top:609px;width:60px;text-align:center;line-height:17px;font-size:13px;white-space:nowrap;overflow:hidden">材料</div>
<div class="sans" style="left:118px;top:609px;width:80px;text-align:left;padding-left:3px;line-height:17px;font-size:13px;white-space:nowrap;overflow:hidden">G机械维修</div>
<div class="sans" style="left:198px;top:609px;width:100px;text-align:left;padding-left:3px;line-height:17px;font-size:13px;white-space:nowrap;overflow:hidden">350搅拌机砼轮螺</div>
<div class="sans" style="left:398px;top:609px;width:50px;text-align:center;line-height:17px;font-size:13px;white-space:nowrap;overflow:hidden">个</div>
<div class="sans" style="left:448px;top:609px;width:80px;text-align:right;padding-right:3px;line-height:17px;font-size:13.5px;white-space:nowrap;overflow:hidden">20.00</div>
<div class="sans" style="left:528px;top:609px;width:80px;text-align:right;padding-right:3px;line-height:17px;font-size:13.5px;white-space:nowrap;overflow:hidden">8.49</div>
<div class="sans" style="left:608px;top:609px;width:80px;text-align:right;padding-right:3px;line-height:17px;font-size:13.5px;white-space:nowrap;overflow:hidden">9.00</div>
<div class="sans" style="left:688px;top:609px;width:80px;text-align:right;padding-right:3px;line-height:17px;font-size:13.5px;white-space:nowrap;overflow:hidden">169.81</div>
<div class="sans" style="left:768px;top:609px;width:80px;text-align:right;padding-right:3px;line-height:17px;font-size:13.5px;white-space:nowrap;overflow:hidden">180.00</div>
<div style="left:4px;top:631px;width:15px;height:27px;background:#f4f4f4;border-bottom:1px solid #c8c8c8;border-right:1px solid #c8c8c8"></div>
<div style="left:19px;top:657px;width:1038px;height:1px;background:#a0a0a0"></div>
<div class="sans" style="left:58px;top:636px;width:60px;text-align:center;line-height:17px;font-size:13px;white-space:nowrap;overflow:hidden">材料</div>
<div class="sans" style="left:118px;top:636px;width:80px;text-align:left;padding-left:3px;line-height:17px;font-size:13px;white-space:nowrap;overflow:hidden">G机械维修</div>
<div class="sans" style="left:198px;top:636px;width:100px;text-align:left;padding-left:3px;line-height:17px;font-size:13px;white-space:nowrap;overflow:hidden">350搅拌机砼轮钢</div>
<div class="sans" style="left:398px;top:636px;width:50px;text-align:center;line-height:17px;font-size:13px;white-space:nowrap;overflow:hidden">个</div>
<div class="sans" style="left:448px;top:636px;width:80px;text-align:right;padding-right:3px;line-height:17px;font-size:13.5px;white-space:nowrap;overflow:hidden">30.00</div>
<div class="sans" style="left:528px;top:636px;width:80px;text-align:right;padding-right:3px;line-height:17px;font-size:13.5px;white-space:nowrap;overflow:hidden">9.43</div>
<div class="sans" style="left:608px;top:636px;width:80px;text-align:right;padding-right:3px;line-height:17px;font-size:13.5px;white-space:nowrap;overflow:hidden">10.00</div>
<div class="sans" style="left:688px;top:636px;width:80px;text-align:right;padding-right:3px;line-height:17px;font-size:13.5px;white-space:nowrap;overflow:hidden">283.02</div>
<div class="sans" style="left:768px;top:636px;width:80px;text-align:right;padding-right:3px;line-height:17px;font-size:13.5px;white-space:nowrap;overflow:hidden">300.00</div>
<div style="left:58px;top:577px;width:1px;height:81px;background:#a0a0a0"></div>
<div style="left:118px;top:577px;width:1px;height:81px;background:#a0a0a0"></div>
<div style="left:198px;top:577px;width:1px;height:81px;background:#a0a0a0"></div>
<div style="left:298px;top:577px;width:1px;height:81px;background:#a0a0a0"></div>
<div style="left:398px;top:577px;width:1px;height:81px;background:#a0a0a0"></div>
<div style="left:448px;top:577px;width:1px;height:81px;background:#a0a0a0"></div>
<div style="left:528px;top:577px;width:1px;height:81px;background:#a0a0a0"></div>
<div style="left:608px;top:577px;width:1px;height:81px;background:#a0a0a0"></div>
<div style="left:688px;top:577px;width:1px;height:81px;background:#a0a0a0"></div>
<div style="left:768px;top:577px;width:1px;height:81px;background:#a0a0a0"></div>
<div style="left:848px;top:577px;width:1px;height:81px;background:#a0a0a0"></div>
<div style="left:948px;top:577px;width:1px;height:81px;background:#a0a0a0"></div>
<div style="left:1038px;top:577px;width:1px;height:81px;background:#a0a0a0"></div>
<div style="left:4px;top:664px;width:1053px;height:16px;background:#f0f0f0"></div>
<div style="left:21px;top:665px;width:654px;height:14px;background:#cdcdcd"></div>
<svg style="left:9px;top:668px" width="7" height="9" viewBox="0 0 7 9"><path d="M5.5 0.5L1.5 4.5L5.5 8.5" fill="none" stroke="#606060" stroke-width="1.8"/></svg>
<svg style="left:1045px;top:668px" width="7" height="9" viewBox="0 0 7 9"><path d="M1.5 0.5L5.5 4.5L1.5 8.5" fill="none" stroke="#606060" stroke-width="1.8"/></svg>
<div style="left:2px;top:682px;width:1059px;height:34px;background:#e5e5e5;border-top:2px solid #fafafa;border-bottom:1px solid #a8a8a8;border-right:1px solid #c8c8c8"></div>
<div class="lb " style="left:52px;top:690px;">审核流程</div>
<div class="in " style="left:106px;top:690px;width:361px;height:20px;background:#ffffe1;text-align:left;"></div>
<svg class="hand" style="left:473px;top:696px" width="16" height="10" viewBox="0 0 16 10" shape-rendering="crispEdges"><path d="M7 0h1v1h-1zM8 0h1v1h-1zM9 0h1v1h-1zM6 1h1v1h-1zM10 1h1v1h-1zM11 1h1v1h-1zM12 1h1v1h-1zM13 1h1v1h-1zM14 1h1v1h-1zM15 1h1v1h-1zM1 2h1v1h-1zM2 2h1v1h-1zM3 2h1v1h-1zM4 2h1v1h-1zM5 2h1v1h-1zM6 2h1v1h-1zM7 2h1v1h-1zM8 2h1v1h-1zM11 2h1v1h-1zM13 2h1v1h-1zM14 2h1v1h-1zM15 2h1v1h-1zM0 3h1v1h-1zM11 3h1v1h-1zM13 3h1v1h-1zM14 3h1v1h-1zM15 3h1v1h-1zM1 4h1v1h-1zM2 4h1v1h-1zM3 4h1v1h-1zM4 4h1v1h-1zM5 4h1v1h-1zM6 4h1v1h-1zM11 4h1v1h-1zM13 4h1v1h-1zM14 4h1v1h-1zM15 4h1v1h-1zM3 5h1v1h-1zM11 5h1v1h-1zM13 5h1v1h-1zM14 5h1v1h-1zM15 5h1v1h-1zM4 6h1v1h-1zM5 6h1v1h-1zM6 6h1v1h-1zM11 6h1v1h-1zM13 6h1v1h-1zM14 6h1v1h-1zM15 6h1v1h-1zM4 7h1v1h-1zM11 7h1v1h-1zM13 7h1v1h-1zM14 7h1v1h-1zM15 7h1v1h-1zM5 8h1v1h-1zM6 8h1v1h-1zM7 8h1v1h-1zM8 8h1v1h-1zM9 8h1v1h-1zM10 8h1v1h-1zM11 8h1v1h-1zM12 8h1v1h-1zM13 8h1v1h-1zM15 8h1v1h-1zM13 9h1v1h-1zM14 9h1v1h-1zM15 9h1v1h-1z" fill="#000"/><path d="M7 1h1v1h-1zM9 1h1v1h-1zM10 2h1v1h-1zM1 3h1v1h-1zM3 3h1v1h-1zM5 3h1v1h-1zM7 3h1v1h-1zM9 3h1v1h-1zM8 4h1v1h-1zM10 4h1v1h-1zM5 5h1v1h-1zM7 5h1v1h-1zM9 5h1v1h-1zM8 6h1v1h-1zM10 6h1v1h-1zM5 7h1v1h-1zM7 7h1v1h-1zM9 7h1v1h-1zM14 8h1v1h-1z" fill="#ff0"/><path d="M8 1h1v1h-1zM9 2h1v1h-1zM2 3h1v1h-1zM4 3h1v1h-1zM6 3h1v1h-1zM8 3h1v1h-1zM10 3h1v1h-1zM7 4h1v1h-1zM9 4h1v1h-1zM4 5h1v1h-1zM6 5h1v1h-1zM8 5h1v1h-1zM10 5h1v1h-1zM7 6h1v1h-1zM9 6h1v1h-1zM6 7h1v1h-1zM8 7h1v1h-1zM10 7h1v1h-1z" fill="#fff"/><path d="M12 2h1v1h-1zM12 3h1v1h-1zM12 4h1v1h-1zM12 5h1v1h-1zM12 6h1v1h-1zM12 7h1v1h-1z" fill="#0ff"/></svg>
<svg class="hand" style="left:501px;top:690px" width="20" height="20" viewBox="0 0 20 20"><g transform="translate(9.5 12) rotate(-45)"><rect x="0" y="-2.1" width="4.6" height="4.2" fill="#f00"/><rect x="4.6" y="-2.1" width="6.4" height="4.2" fill="#ff0"/><path d="M0 -2.1H11" stroke="#000" stroke-width="0.9"/><path d="M0 2.1H11" stroke="#000" stroke-width="0.7"/><path d="M5 -1h1v1h-1zM7 -1h1v1h-1zM6 0.3h1v1h-1zM8 0.3h1v1h-1z" fill="#000"/></g><path d="M1.5 17.5L1.8 14L4 12L6.5 11.8L8.5 13.5L10 15.5L11 17.5Z" fill="#000"/><path d="M3.5 16.2L4.5 13.8L7 12.8L7 16Z" fill="#fff"/><path d="M3 8.5h2v2h-2zM4 8h2v1h-2z" fill="#000"/><path d="M5 4h1v1h-1zM6 6h1v1h-1zM7 8h1v1h-1zM6 9h1v1h-1zM6 11h1v1h-1zM11 15h1v1h-1zM13 16h1v1h-1z" fill="#000" shape-rendering="crispEdges"/></svg>
<div class="lb " style="left:533px;top:690px;"><span style="color:#e80000">注：选择审核流程后可自动发起</span></div>
<div style="left:2px;top:716px;width:1059px;height:38px;background:linear-gradient(#fdfdfd,#e8e8e8);border-right:1px solid #c8c8c8;border-bottom:1px solid #a0a0a0"></div>
<div style="left:279px;top:725px;width:87px;height:23px;background:#e1e1e1;border:1px solid #adadad"></div>
<svg style="left:301px;top:730px" width="17" height="15" viewBox="0 0 17 15"><defs><linearGradient id="pb" x1="0" y1="0" x2="0" y2="1"><stop offset="0" stop-color="#e8f2ff"/><stop offset="1" stop-color="#8fb4e0"/></linearGradient></defs><path d="M4.5 0.5h9.5l-1.5 5h-9.5z" fill="#fff" stroke="#7f9fc0"/><path d="M1.5 5.5h13l2 2v5h-15.5v-5z" fill="url(#pb)" stroke="#4a78b8"/><path d="M1 10.5h15v3.5h-14z" fill="#2a5cb0"/><path d="M6 8h2v1h-2z" fill="#1a1"/><path d="M9 8h2v1h-2z" fill="#e22"/></svg>
<div class="lb " style="left:321px;top:727px;">打印</div>
<div style="left:511px;top:725px;width:84px;height:23px;background:#e1e1e1;border:1px solid #adadad"></div>
<svg style="left:516px;top:726px" width="20" height="20" viewBox="0 0 20 20"><path d="M2 13L5 10L8 15L17 3L19 5L8 20Z" fill="#203a90"/><path d="M1 11L5 8L8 13L17 1L19 3L8 18Z" fill="#18a018" stroke="#0a600a" stroke-width="0.8"/></svg>
<div class="lb " style="left:540px;top:728px;">重新保存</div>
<div style="left:607px;top:725px;width:83px;height:23px;background:#e1e1e1;border:2px solid #0078d7"></div>
<div style="left:610px;top:728px;width:77px;height:17px;border:1px dotted #000"></div>
<svg style="left:628px;top:729px" width="16" height="16" viewBox="0 0 16 16"><path d="M2.5 2.5L13.5 13.5M13.5 2.5L2.5 13.5" stroke="#a81010" stroke-width="3.4" stroke-linecap="round"/></svg>
<div class="lb " style="left:648px;top:728px;">取消</div>
</body></html>
